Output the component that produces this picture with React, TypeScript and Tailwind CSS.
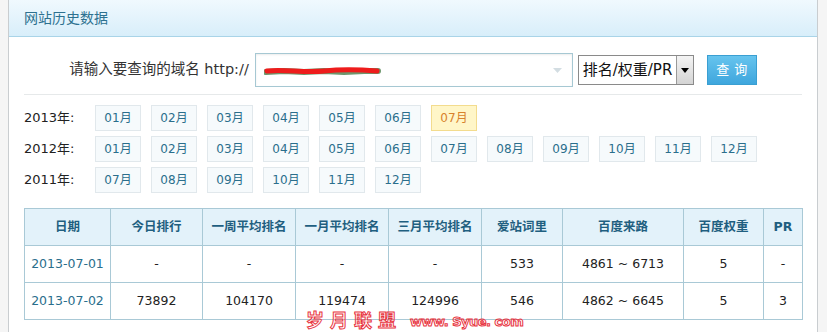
const years = [
  { year: "2013年:", months: ["01月", "02月", "03月", "04月", "05月", "06月", "07月"], active: "07月" },
  { year: "2012年:", months: ["01月", "02月", "03月", "04月", "05月", "06月", "07月", "08月", "09月", "10月", "11月", "12月"], active: "" },
  { year: "2011年:", months: ["07月", "08月", "09月", "10月", "11月", "12月"], active: "" },
];

const columns = [
  { title: "日期", width: 86 },
  { title: "今日排行", width: 92 },
  { title: "一周平均排名", width: 93 },
  { title: "一月平均排名", width: 93 },
  { title: "三月平均排名", width: 93 },
  { title: "爱站词里", width: 81 },
  { title: "百度来路", width: 121 },
  { title: "百度权重", width: 80 },
  { title: "PR", width: 39 },
];

const rows = [
  ["2013-07-01", "-", "-", "-", "-", "533", "4861 ~ 6713", "5", "-"],
  ["2013-07-02", "73892", "104170", "119474", "124996", "546", "4862 ~ 6645", "5", "3"],
];

export default function App() {
  return (
    <div className="relative w-[827px] h-[332px] overflow-hidden bg-[#f5f5f5] font-['DejaVu_Sans','Noto_Sans_CJK_SC',sans-serif]">
      <div className="ml-[8px] w-[810px] h-full border-x border-[#c9cdd0] bg-white">
        {/* header */}
        <div className="h-[37px] pl-[15px] flex items-center border-b border-[#a9d4e8] bg-gradient-to-b from-[#f0f9fe] to-[#d8eefa] text-[14px] text-[#2d7190]">
          网站历史数据
        </div>

        <div className="px-[15px]">
          {/* query row */}
          <div className="mt-[16px] h-[34px] flex items-center justify-center text-[14.5px] text-[#333]">
            <span className="mr-[6px]">请输入要查询的域名 http://</span>
            <div className="relative w-[318px] h-[34px] border border-[#a6c8d3] bg-white shadow-[inset_0_1px_2px_rgba(0,0,0,0.08)]">
              <svg className="absolute left-[8px] top-[11px]" width="120" height="12" viewBox="0 0 120 12">
                <path d="M2 7 L20 6 L40 7 L60 6 L80 7 L100 6 L114 6" stroke="#2f6b2f" strokeWidth="6" strokeLinecap="round" fill="none" opacity="0.7" />
                <path d="M3 6 C20 4, 40 8, 60 6 S 100 5, 113 6" stroke="#ee1c1c" strokeWidth="5" strokeLinecap="round" fill="none" />
              </svg>
              <svg className="absolute right-[10px] top-[14px]" width="9" height="6" viewBox="0 0 9 6">
                <path d="M0 0 H9 L4.5 5 Z" fill="#d3dde2" />
              </svg>
            </div>
            <div className="ml-[5px] w-[116px] h-[30px] flex items-center border border-[#8a8a8a] bg-white">
              <span className="flex-1 pl-[4px] text-[15px] text-[#111] leading-none whitespace-nowrap">排名/权重/PR</span>
              <div className="w-[17px] h-[28px] flex items-center justify-center border-l border-[#999] bg-gradient-to-b from-[#f4f4f4] to-[#d4d4d4]">
                <svg width="8" height="5" viewBox="0 0 8 5">
                  <path d="M0 0 H8 L4 5 Z" fill="#000" />
                </svg>
              </div>
            </div>
            <button className="ml-[13px] w-[50px] h-[30px] border border-[#3a9fd2] bg-gradient-to-b from-[#66c4ee] to-[#3ea6dd] text-white text-[13px] tracking-[5px] pl-[5px]">
              查询
            </button>
          </div>

          <div className="mt-[7px] border-t border-[#e6e9ea]" />

          {/* months */}
          <div className="mt-[10px] flex flex-col gap-[5px]">
            {years.map((y) => (
              <div key={y.year} className="flex items-center">
                <span className="w-[71px] text-[13px] text-[#222]">{y.year}</span>
                <div className="flex gap-[10px]">
                  {y.months.map((m) => (
                    <span
                      key={m}
                      className={
                        m === y.active
                          ? "w-[46px] h-[26px] flex items-center justify-center border border-[#f3dc8e] bg-[#fff6c8] text-[12px] text-[#d8822c]"
                          : "w-[46px] h-[26px] flex items-center justify-center border border-[#e1e8ec] bg-[#f6fafc] text-[12px] text-[#2a6e8c]"
                      }
                    >
                      {m}
                    </span>
                  ))}
                </div>
              </div>
            ))}
          </div>

          {/* table */}
          <table className="mt-[15px] w-[778px] table-fixed border-collapse text-[12.5px]">
            <colgroup>
              {columns.map((c) => (
                <col key={c.title} style={{ width: c.width }} />
              ))}
            </colgroup>
            <thead>
              <tr className="h-[37px] bg-[#e3f2fa]">
                {columns.map((c) => (
                  <th key={c.title} className="border border-[#a9c9d6] font-bold text-[#1f5f80] text-center">
                    {c.title}
                  </th>
                ))}
              </tr>
            </thead>
            <tbody>
              {rows.map((r) => (
                <tr key={r[0]} className="h-[37px]">
                  {r.map((v, i) => (
                    <td
                      key={i}
                      className={
                        i === 0
                          ? "border border-[#a9c9d6] text-center text-[#2a6e8c]"
                          : "border border-[#a9c9d6] text-center text-[#222]"
                      }
                    >
                      {v}
                    </td>
                  ))}
                </tr>
              ))}
            </tbody>
          </table>
        </div>
      </div>

      {/* watermark */}
      <div className="absolute left-[306px] top-[312px] flex items-center gap-[8px] leading-none text-transparent font-bold [-webkit-text-stroke:1px_#e8353f] whitespace-nowrap">
        <span className="text-[18px] tracking-[6px]">岁月联盟</span>
        <span className="text-[13px] tracking-[-0.5px] font-['DejaVu_Sans',sans-serif]">www. Syue. com</span>
      </div>
    </div>
  );
}
